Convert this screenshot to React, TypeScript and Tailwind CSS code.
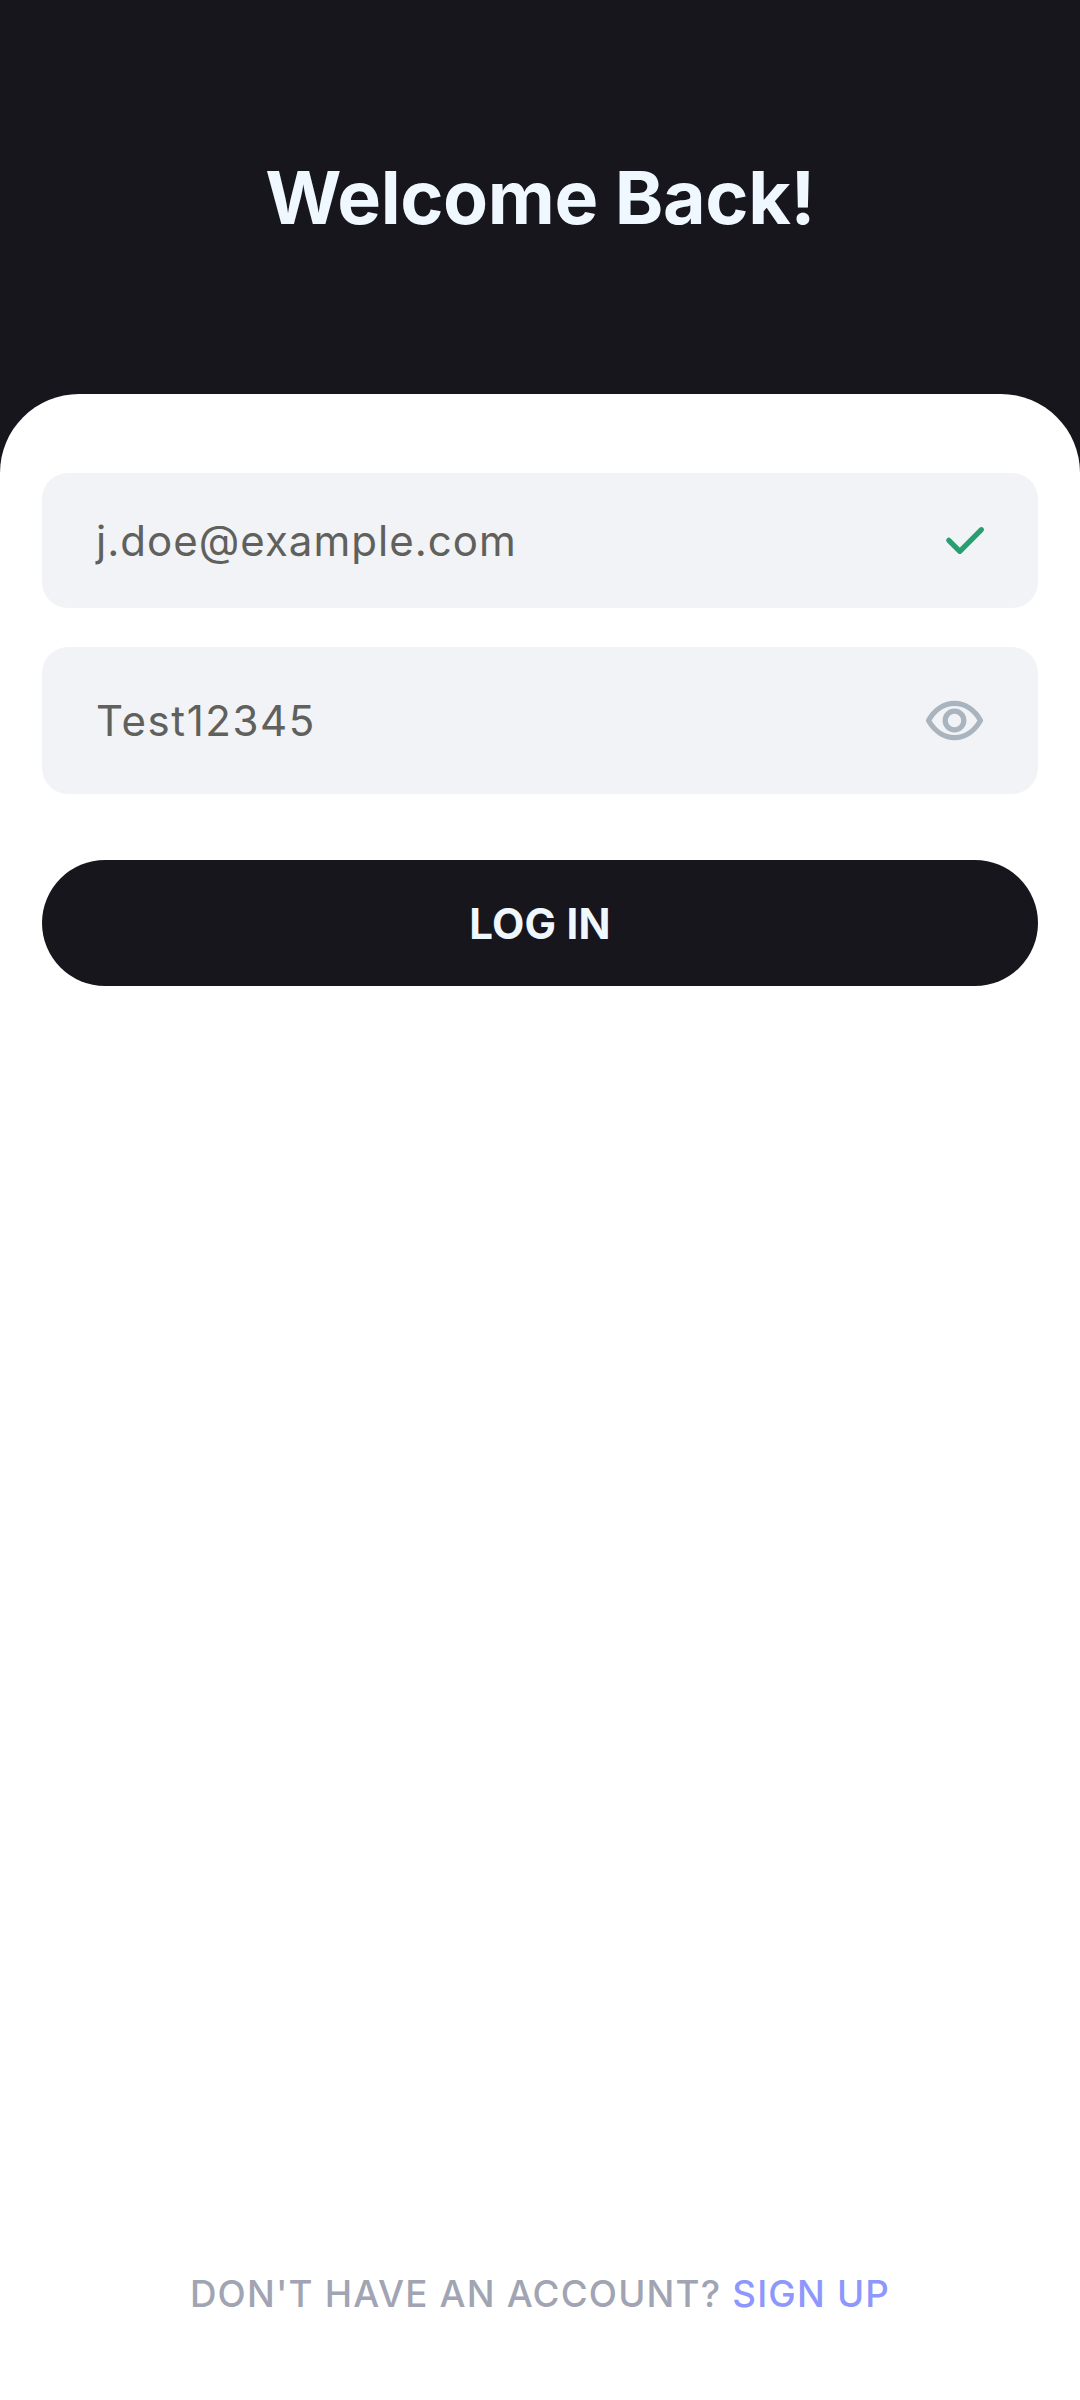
import React from "react";

function CheckIcon() {
  return (
    <svg className="h-[63px] w-[63px]" viewBox="0 0 63 63" fill="none" aria-hidden="true">
      <path d="M15.8 31.3L26.8 42.3L48.4 20.7" stroke="#27A06F" strokeWidth="5.25" strokeLinecap="round" strokeLinejoin="round" />
    </svg>
  );
}

function EyeIcon() {
  return (
    <svg className="h-[63px] w-[63px]" viewBox="0 0 63 63" fill="none" aria-hidden="true">
      <path
        d="M5.5 31.5C11.5 21 21 14.4 31.5 14.4S51.5 21 57.5 31.5C51.5 42 42 48.6 31.5 48.6S11.5 42 5.5 31.5Z"
        stroke="#A9B4BF"
        strokeWidth="5.25"
        strokeLinejoin="round"
      />
      <circle cx="31.5" cy="31.5" r="9.3" stroke="#A9B4BF" strokeWidth="5.25" />
    </svg>
  );
}

export default function App() {
  return (
    <main className="flex h-[2400px] w-[1080px] flex-col bg-[#17161C] font-['Inter',sans-serif]">
      <header className="flex h-[394px] shrink-0 items-center justify-center pt-px">
        <h1 className="text-[73.5px] leading-none font-bold tracking-[-0.4px] whitespace-nowrap text-[#EFF7FF]">Welcome Back!</h1>
      </header>
      <section className="flex flex-1 flex-col rounded-t-[79px] bg-white px-[42px] pt-[79px]">
        <label className="flex h-[135px] items-center justify-between rounded-[26px] bg-[#F1F3F7] pr-[42px] pl-[54px]">
          <span className="text-[42px] leading-none tracking-[1.02px] text-[#60605C]">j.doe@example.com</span>
          <CheckIcon />
        </label>
        <label className="mt-[39px] flex h-[147px] items-center justify-between rounded-[26px] bg-[#F1F3F7] pr-[52px] pl-[54px]">
          <span className="text-[42px] leading-none tracking-[1.6px] text-[#60605C]">Test12345</span>
          <EyeIcon />
        </label>
        <button className="mt-[66px] flex h-[126px] items-center justify-center rounded-full bg-[#17161C] pt-[2px] text-[42px] leading-none font-bold tracking-[0.2px] text-[#EFF7FF]">
          LOG IN
        </button>
        <footer className="mt-auto mb-[85px] flex h-[42px] items-center justify-center text-[36.75px] leading-none font-medium tracking-[1.18px] whitespace-pre">
          <span className="text-[#A1A4B2]">DON'T HAVE AN ACCOUNT? </span>
          <a className="text-[#8E97FD]">SIGN UP</a>
        </footer>
      </section>
    </main>
  );
}
